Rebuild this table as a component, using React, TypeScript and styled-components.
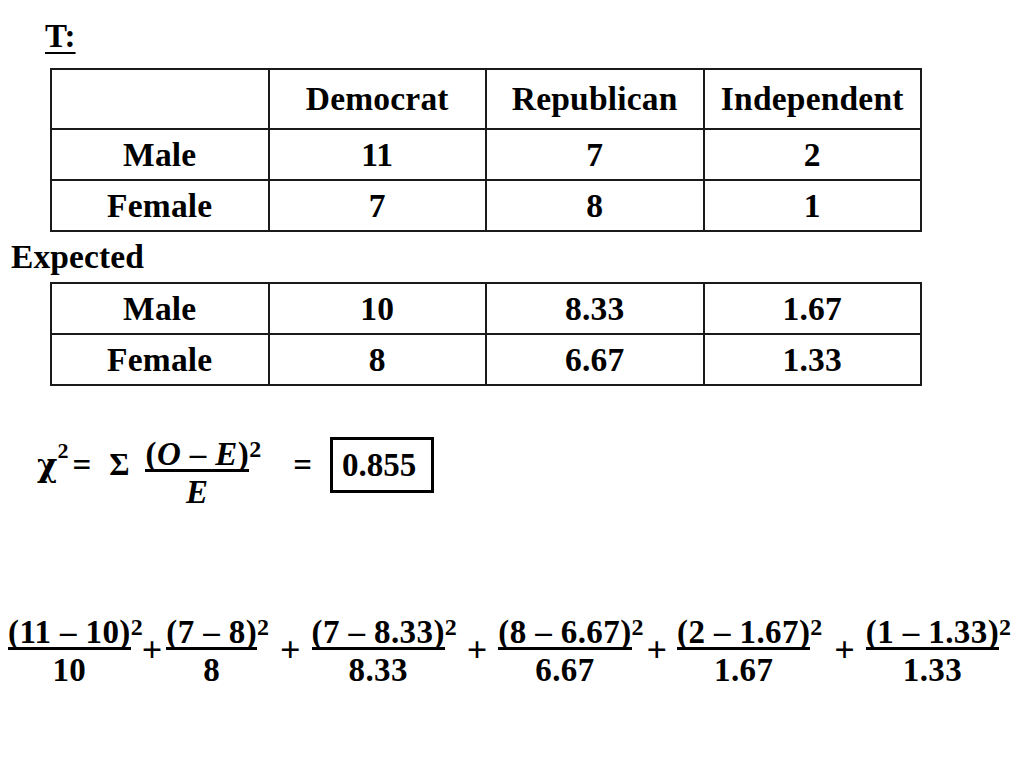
import React from 'react';
import styled, { createGlobalStyle } from 'styled-components';

const Global = createGlobalStyle`
  html, body { margin: 0; padding: 0; background: #fff; }
  body { font-family: "Liberation Serif", "Times New Roman", serif; color: #000; }
`;

const Page = styled.div`
  width: 1024px;
  height: 768px;
  overflow: hidden;
  box-sizing: border-box;
  padding-top: 20px;
  font-weight: 700;
`;

const Title = styled.h1`
  margin: 0 0 0 45px;
  font-size: 33px;
  line-height: 32px;
  height: 32px;
  font-weight: 700;
  text-decoration: underline;
  text-decoration-thickness: 2px;
  text-underline-offset: 5px;
`;

const Table = styled.table<{ $mt: number }>`
  margin: ${(p) => p.$mt}px 0 0 50px;
  width: 872px;
  table-layout: fixed;
  border-collapse: separate;
  border-spacing: 0;
  border-top: 2px solid #1a1a1a;
  border-left: 2px solid #1a1a1a;
`;

const Cell = styled.td<{ $h: number }>`
  box-sizing: border-box;
  height: ${(p) => p.$h}px;
  padding: 0;
  border-right: 2px solid #1a1a1a;
  border-bottom: 2px solid #1a1a1a;
  text-align: center;
  vertical-align: middle;
  font-size: 33.5px;
  letter-spacing: 0.2px;
  font-weight: 700;
`;

const Label = styled.div`
  margin: 7px 0 0 11px;
  font-size: 33.5px;
  line-height: 36px;
  height: 36px;
  letter-spacing: 0.1px;
`;

const FormulaRow = styled.div`
  display: flex;
  align-items: flex-start;
  margin: 51px 0 0 37px;
  font-size: 33px;
  line-height: 56px;
`;

const Term = styled.span<{ $ml?: number }>`
  margin-left: ${(p) => p.$ml ?? 0}px;
  white-space: nowrap;
`;

const Chi = styled.span`
  font-family: "DejaVu Serif", "Liberation Serif", serif;
  font-size: 31px;
`;

const Power = styled.span`
  font-family: "Liberation Serif", serif;
  font-size: 22px;
  line-height: 0;
  vertical-align: 18px;
`;

const Sigma = styled.span<{ $ml?: number }>`
  margin-left: ${(p) => p.$ml ?? 0}px;
  font-size: 31px;
`;

const ResultBox = styled.span<{ $ml?: number }>`
  margin-left: ${(p) => p.$ml ?? 0}px;
  border: 3px solid #000;
  line-height: 50px;
  padding: 0 15px 0 9px;
`;

const Frac = styled.span<{ $ml?: number; $mt?: number }>`
  display: inline-grid;
  grid-template-columns: auto auto;
  grid-template-rows: auto auto;
  font-size: 33px;
  line-height: normal;
  letter-spacing: 0.4px;
  margin-left: ${(p) => p.$ml ?? 0}px;
  margin-top: ${(p) => p.$mt ?? 0}px;
`;

const Num = styled.span`
  grid-column: 1;
  grid-row: 1;
  line-height: 30px;
  border-bottom: 3px solid #000;
  white-space: pre;
  text-align: center;
`;

const FracSup = styled.span`
  grid-column: 2;
  grid-row: 1;
  align-self: start;
  margin-top: -2px;
  font-size: 24px;
  line-height: 24px;
  letter-spacing: 0;
`;

const Den = styled.span`
  grid-column: 1;
  grid-row: 2;
  text-align: center;
  line-height: 32px;
  padding-top: 4px;
`;

const Var = styled.i`
  font-style: italic;
`;

const SumRow = styled.div`
  display: flex;
  align-items: flex-start;
  margin-top: 109px;
`;

const Plus = styled.span<{ $ml: number }>`
  margin-left: ${(p) => p.$ml}px;
  margin-top: 18px;
  font-size: 36px;
  line-height: 30px;
`;

const observed = [
  ['Male', '11', '7', '2'],
  ['Female', '7', '8', '1'],
];
const expected = [
  ['Male', '10', '8.33', '1.67'],
  ['Female', '8', '6.67', '1.33'],
];

type SumTerm = { num: string; den: string; ml: number; plus?: number };
const terms: SumTerm[] = [
  { num: '(11 – 10)', den: '10', ml: 8, plus: -1 },
  { num: '(7 – 8)', den: '8', ml: 4, plus: 11 },
  { num: '(7 – 8.33)', den: '8.33', ml: 11, plus: 10 },
  { num: '(8 – 6.67)', den: '6.67', ml: 11, plus: 3 },
  { num: '(2 – 1.67)', den: '1.67', ml: 10, plus: 12 },
  { num: '(1 – 1.33)', den: '1.33', ml: 11 },
];

export default function App() {
  return (
    <>
      <Global />
      <Page>
        <Title>T:</Title>
        <Table $mt={16}>
          <tbody>
            <tr>
              <Cell $h={60}></Cell>
              <Cell $h={60}>Democrat</Cell>
              <Cell $h={60}>Republican</Cell>
              <Cell $h={60}>Independent</Cell>
            </tr>
            {observed.map((r) => (
              <tr key={r[0]}>
                {r.map((c, i) => (
                  <Cell $h={51} key={i}>{c}</Cell>
                ))}
              </tr>
            ))}
          </tbody>
        </Table>
        <Label>Expected</Label>
        <Table $mt={7}>
          <tbody>
            {expected.map((r) => (
              <tr key={r[0]}>
                {r.map((c, i) => (
                  <Cell $h={51} key={i}>{c}</Cell>
                ))}
              </tr>
            ))}
          </tbody>
        </Table>
        <FormulaRow>
          <Term>
            <Chi>χ</Chi>
            <Power>2</Power>
          </Term>
          <Term $ml={4}>=</Term>
          <Sigma $ml={18}>Σ</Sigma>
          <Frac $ml={16} $mt={2}>
            <Num>
              (<Var>O</Var> – <Var>E</Var>)
            </Num>
            <FracSup>2</FracSup>
            <Den>
              <Var>E</Var>
            </Den>
          </Frac>
          <Term $ml={32}>=</Term>
          <ResultBox $ml={18}>0.855</ResultBox>
        </FormulaRow>
        <SumRow>
          {terms.map((t, i) => (
            <React.Fragment key={i}>
              <Frac $ml={t.ml}>
                <Num>{t.num}</Num>
                <FracSup>2</FracSup>
                <Den>{t.den}</Den>
              </Frac>
              {t.plus !== undefined && <Plus $ml={t.plus}>+</Plus>}
            </React.Fragment>
          ))}
        </SumRow>
      </Page>
    </>
  );
}
